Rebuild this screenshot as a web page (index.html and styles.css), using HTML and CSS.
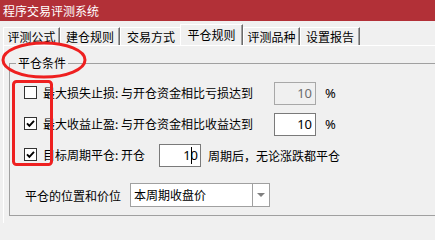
FILE: index.html
```html
<!DOCTYPE html>
<html lang="zh-CN">
<head>
<meta charset="utf-8">
<title>程序交易评测系统</title>
<link rel="stylesheet" href="styles.css">
</head>
<body>
<div class="window">
  <div class="titlebar">程序交易评测系统</div>
  <div class="tabs">
    <div class="tab t1">评测公式</div>
    <div class="tab t2">建仓规则</div>
    <div class="tab t3">交易方式</div>
    <div class="tab active">平仓规则</div>
    <div class="tab t5">评测品种</div>
    <div class="tab t6">设置报告</div>
  </div>
  <div class="panel">
    <fieldset class="group">
      <legend>平仓条件</legend>
      <div class="checks">
        <div class="row">
          <span class="cb"></span>
          <span class="lbl wide">最大损失止损: 与开仓资金相比亏损达到</span>
          <span class="num disabled">10</span>
          <span class="pct">%</span>
        </div>
        <div class="row">
          <span class="cb"><svg viewBox="0 0 11 11" width="11" height="11"><polyline points="2,5.3 4.4,7.8 9,2.8" fill="none" stroke="#000" stroke-width="1.9"/></svg></span>
          <span class="lbl wide">最大收益止盈: 与开仓资金相比收益达到</span>
          <span class="num">10</span>
          <span class="pct">%</span>
        </div>
        <div class="row">
          <span class="cb"><svg viewBox="0 0 11 11" width="11" height="11"><polyline points="2,5.3 4.4,7.8 9,2.8" fill="none" stroke="#000" stroke-width="1.9"/></svg></span>
          <span class="lbl short">目标周期平仓: 开仓</span>
          <span class="num tight">1<span class="caret"></span>0</span>
          <span class="after">周期后，无论涨跌都平仓</span>
        </div>
      </div>
      <div class="row pos">
        <span class="poslbl">平仓的位置和价位</span>
        <div class="combo">
          <span class="combo-text">本周期收盘价</span>
          <span class="combo-btn"><span class="arrow"></span></span>
        </div>
      </div>
    </fieldset>
  </div>
  <svg class="marks" width="435" height="223" viewBox="0 0 435 223">
    <ellipse cx="44" cy="60" rx="41" ry="17" fill="none" stroke="#ee2020" stroke-width="3"/>
    <rect x="13.5" y="81.5" width="38" height="83" rx="3" fill="none" stroke="#ee2020" stroke-width="3"/>
  </svg>
</div>
</body>
</html>
```
FILE: styles.css
```css
html, body {
  margin: 0;
  padding: 0;
}
body {
  width: 435px;
  height: 223px;
  overflow: hidden;
  background: #f0f0f0;
  font-family: "Noto Sans CJK SC", "Noto Sans", sans-serif;
  font-size: 12px;
  color: #000;
}
.window {
  position: relative;
  width: 435px;
  height: 223px;
}
.titlebar {
  height: 21px;
  line-height: 21px;
  padding-left: 3px;
  background: #b23037;
  color: #fff;
  font-size: 12px;
}
.tabs {
  display: flex;
  align-items: flex-end;
  height: 21px;
  padding-top: 3px;
  padding-left: 3px;
}
.tab {
  box-sizing: border-box;
  height: 18px;
  line-height: 17px;
  text-align: center;
  border-top: 1px solid #fff;
  border-left: 1px solid #fff;
  border-right: 1px solid #6b6b6b;
  box-shadow: inset -1px 0 0 #a0a0a0;
  white-space: nowrap;
}
.t1 { width: 57px; }
.t2 { width: 60px; }
.t3 { width: 62px; }
.t5 { width: 57px; }
.t6 { width: 60px; }
.tab.active {
  width: 63px;
  height: 21px;
  line-height: 20px;
  margin-left: -2px;
  position: relative;
  z-index: 1;
  background: #f0f0f0;
}
.panel {
  margin-left: 3px;
  border-top: 1px solid #fff;
  border-left: 1px solid #fff;
  height: 200px;
}
.group {
  box-sizing: border-box;
  width: 431px;
  margin: 10px 0 0 5px;
  padding: 11px 0 8px 6px;
  border: 1px solid #a0a0a0;
  min-width: 0;
}
.group legend {
  padding: 0 2px;
  line-height: 14px;
  font-size: 12px;
}
.checks {
  display: flex;
  flex-direction: column;
  gap: 7px;
}
.row {
  display: flex;
  align-items: center;
  height: 24px;
  margin-left: 8px;
  white-space: nowrap;
}
.cb {
  box-sizing: border-box;
  width: 13px;
  height: 13px;
  border: 1px solid #333;
  background: #fff;
  display: flex;
  align-items: center;
  justify-content: center;
  margin-right: 6px;
  margin-top: -1px;
}
.cb svg {
  display: block;
}
.lbl {
  line-height: 24px;
}
.lbl.wide { width: 231px; }
.lbl.short { width: 116px; }
.num {
  box-sizing: border-box;
  width: 42px;
  height: 23px;
  border: 1px solid #7a7a7a;
  background: #fff;
  display: flex;
  align-items: center;
  justify-content: flex-end;
  padding-right: 3px;
  font-family: "Noto Sans", sans-serif;
  font-size: 13px;
}
.num.disabled {
  border-color: #a8a8a8;
  background: #f0f0f0;
  color: #6d6d6d;
}
.num.tight {
  padding-right: 2px;
}
.caret {
  display: inline-block;
  width: 1px;
  height: 17px;
  background: #000;
  margin-right: -1px;
  position: relative;
  z-index: 1;
}
.pct {
  margin-left: 9px;
  font-family: "Noto Sans", sans-serif;
  font-size: 13px;
}
.after {
  margin-left: 7px;
}
.row.pos {
  margin-top: 16px;
  margin-left: 9px;
}
.poslbl {
  width: 105px;
}
.combo {
  box-sizing: border-box;
  width: 140px;
  height: 24px;
  border: 1px solid #a0a0a0;
  background: #fff;
  display: flex;
}
.combo-text {
  flex: 1;
  padding-left: 3px;
  line-height: 22px;
}
.combo-btn {
  box-sizing: border-box;
  width: 17px;
  border-left: 1px solid #a0a0a0;
  display: flex;
  align-items: center;
  justify-content: center;
}
.arrow {
  width: 0;
  height: 0;
  border-left: 4px solid transparent;
  border-right: 4px solid transparent;
  border-top: 4px solid #808080;
}
.marks {
  position: absolute;
  left: 0;
  top: 0;
  pointer-events: none;
}
```
